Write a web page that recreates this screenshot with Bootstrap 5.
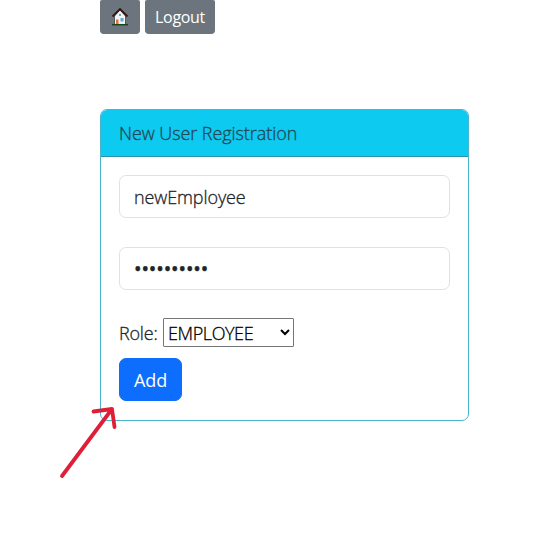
<!DOCTYPE html>
<html lang="en">
<head>
<meta charset="utf-8">
<meta name="viewport" content="width=device-width, initial-scale=1">
<title>New User Registration</title>
<link href="https://cdn.jsdelivr.net/npm/bootstrap@5.3.0/dist/css/bootstrap.min.css" rel="stylesheet">
<style>
  body { font-family: "Open Sans", "Noto Sans", sans-serif; font-size: 18px; font-weight: 300; line-height: 27px; letter-spacing: -.07px; min-height: 560px; overflow: hidden; -webkit-text-stroke: .3px; }
  .toolbar { margin-left: 100px; gap: 5px; }
  .toolbar .btn { --bs-btn-font-size: 16px; --bs-btn-line-height: 24px; --bs-btn-padding-x: 9px; --bs-btn-padding-y: 5px; height: 34px; border-top: 0; border-radius: 2px 2px 4px 4px; letter-spacing: -.3px; -webkit-text-stroke: 0; }
  .toolbar .home-btn { width: 40px; }
  .toolbar .logout-btn { width: 70px; }
  .register-card { width: 369px; height: 312px; margin: 75px 0 0 100px; --bs-card-border-color: #4bb3cb; --bs-card-border-radius: 7px; --bs-card-inner-border-radius: 6px; }
  .register-card .card-header { height: 47px; padding: 10px 18px; background: #0dcaf0; border-bottom-color: #2a93ab; color: #214854; }
  .register-card .card-body { padding: 18px; }
  .register-card .form-control { height: 43px; padding: 7px 14px; font-size: 18px; font-weight: 300; line-height: 27px; letter-spacing: -.1px; border-color: #dee2e6; border-radius: 7px; margin-bottom: 29px; -webkit-text-stroke: .3px; }
  .register-card .form-control[type="password"] { padding: 7px 14px; font-size: 20px; font-weight: 400; letter-spacing: -.1px; -webkit-text-stroke: .5px; }
  .role-row { height: 29px; margin: -1px 0 11px; gap: 5px; }
  .role-row label { width: 39px; padding-top: 1px; white-space: nowrap; letter-spacing: -.2px; }
  .role-select { width: 131px; height: 29px; font-size: 18px; font-weight: 300; letter-spacing: -.4px; padding: 1px 0 0; border: 1px solid #767676; border-radius: 1px; background: #fff; color: #000; -webkit-text-stroke: .3px; }
  .add-btn { width: 63px; height: 43px; --bs-btn-font-size: 18px; --bs-btn-line-height: 27px; --bs-btn-padding-x: 0; --bs-btn-padding-y: 8px; --bs-btn-border-radius: 7px; letter-spacing: -.1px; -webkit-text-stroke: 0; }
  .pointer-arrow { left: 55px; top: 400px; pointer-events: none; }
</style>
</head>
<body class="position-relative">
  <nav class="toolbar d-flex">
    <button class="btn btn-secondary home-btn d-flex align-items-center justify-content-center p-0" aria-label="Home">
      <svg width="18" height="19" viewBox="0 0 18 19">
        <path d="M3.500 9 9 3l5.500 6v8.500h-11z" fill="#f4f5f2" stroke="#344" stroke-width=".8"/>
        <path d="M1.500 9.500 9 2l7.500 7.500" fill="none" stroke="#35150f" stroke-width="1.800"/>
        <path d="M5 12.500h2.500V17H5z" fill="#e2733c"/>
        <path d="M9.500 11h3v3.500h-3zM8 7h2v2H8z" fill="#62a9cf"/>
        <path d="M1 17.700h16" stroke="#17451d" stroke-width="1.500"/>
      </svg>
    </button>
    <button class="btn btn-secondary logout-btn">Logout</button>
  </nav>
  <main class="card register-card">
    <div class="card-header">New User Registration</div>
    <form class="card-body">
      <input class="form-control" type="text" value="newEmployee" aria-label="Username">
      <input class="form-control" type="password" value="abcdefghij" aria-label="Password">
      <div class="role-row d-flex align-items-center">
        <label for="role">Role:</label>
        <select id="role" class="role-select"><option>EMPLOYEE</option></select>
      </div>
      <button type="button" class="btn btn-primary add-btn">Add</button>
    </form>
  </main>
  <svg class="pointer-arrow position-absolute" width="70" height="85" viewBox="0 0 70 85" fill="none" stroke="#df1f38" stroke-width="3.800" stroke-linecap="round" stroke-linejoin="round">
    <path d="M7 76 57 9M38.500 11.500 57 9l2.500 18"/>
  </svg>
<script src="https://cdn.jsdelivr.net/npm/bootstrap@5.3.0/dist/js/bootstrap.bundle.min.js"></script>
</body>
</html>
